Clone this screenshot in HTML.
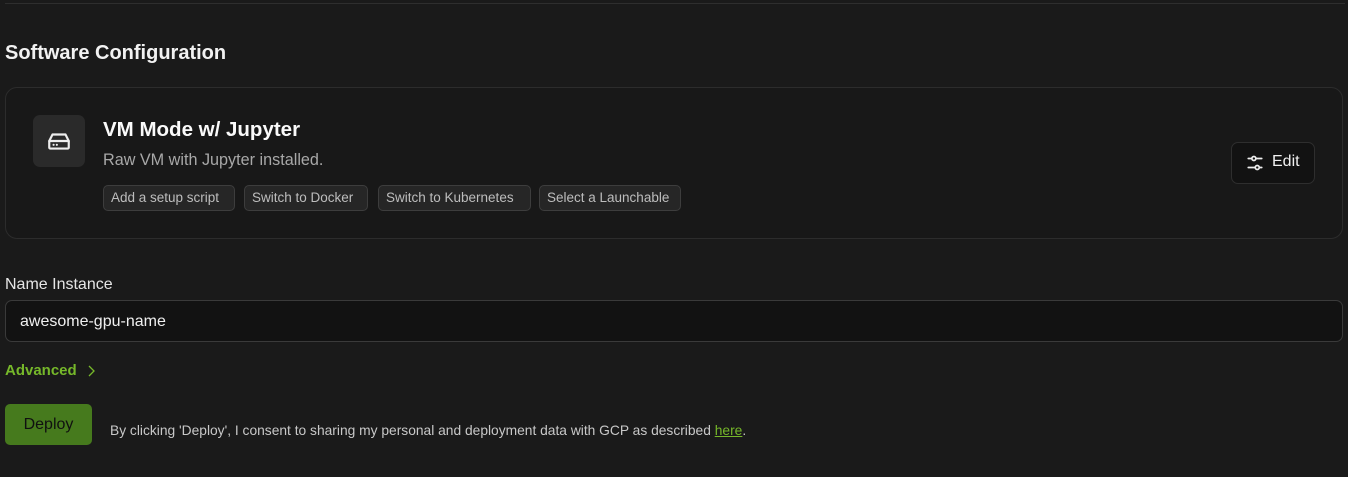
<!DOCTYPE html>
<html><head><style>
*{box-sizing:border-box;margin:0;padding:0}
body{width:1348px;height:477px;background:#1a1a1a;font-family:"Liberation Sans",sans-serif;color:#eee;position:relative;overflow:hidden}
.abs{position:absolute}
.tag{position:absolute;top:185px;height:26px;border:1px solid #3d3d3d;background:#262626;border-radius:5px;font-size:13.5px;color:#bdbdbd;line-height:24px;padding:0 7px;white-space:nowrap}
</style></head><body>
<div class="abs" style="left:5px;top:3px;width:1340px;height:1px;background:#2e2e2e"></div>
<div class="abs" style="left:5px;top:42px;font-size:20px;font-weight:bold;color:#f2f2f2">Software Configuration</div>
<div class="abs" style="left:5px;top:87px;width:1338px;height:152px;border:1px solid #2c2c2c;border-radius:12px;background:#181818"></div>
<div class="abs" style="left:33px;top:115px;width:52px;height:52px;border-radius:7px;background:#2a2a2a"></div>
<svg class="abs" style="left:46px;top:128px" width="26" height="26" viewBox="0 0 24 24" fill="none" stroke="#eee" stroke-width="2" stroke-linecap="round" stroke-linejoin="round"><path d="M3 12h18v6a1 1 0 0 1-1 1H4a1 1 0 0 1-1-1z"/><path d="M3 12l3-6h12l3 6"/><path d="M7 15.5h.01M10 15.5h.01"/></svg>
<div class="abs" style="left:103px;top:118px;font-size:20.5px;font-weight:bold;color:#fafafa">VM Mode w/ Jupyter</div>
<div class="abs" style="left:103px;top:151px;font-size:16.2px;color:#a8a8a8">Raw VM with Jupyter installed.</div>
<div class="tag" style="left:103px;width:132px">Add a setup script</div>
<div class="tag" style="left:244px;width:124px">Switch to Docker</div>
<div class="tag" style="left:378px;width:153px">Switch to Kubernetes</div>
<div class="tag" style="left:539px;width:142px">Select a Launchable</div>
<div class="abs" style="left:1231px;top:142px;width:84px;height:42px;border:1px solid #2e2e2e;border-radius:7px;background:#121212"></div>
<svg class="abs" style="left:1246px;top:154px" width="18" height="18" viewBox="0 0 16 16" fill="none" stroke="#eee" stroke-width="1.5" stroke-linecap="round"><path d="M2 4h3M9 4h5M2 12h6M12 12h2"/><circle cx="7" cy="4" r="1.8"/><circle cx="10" cy="12" r="1.8"/></svg>
<div class="abs" style="left:1272px;top:153px;font-size:16px;color:#f0f0f0">Edit</div>
<div class="abs" style="left:5px;top:276px;font-size:16px;color:#e6e6e6">Name Instance</div>
<div class="abs" style="left:5px;top:300px;width:1338px;height:42px;border:1px solid #3a3a3a;border-radius:7px;background:#121212;padding-left:14px;line-height:42px;font-size:16px;color:#f0f0f0">awesome-gpu-name</div>
<div class="abs" style="left:5px;top:362px;font-size:15px;font-weight:bold;color:#76b82a">Advanced</div>
<svg class="abs" style="left:86px;top:364px" width="10" height="14" viewBox="0 0 10 14" fill="none" stroke="#76b82a" stroke-width="1.3"><path d="M3 2l5 5-5 5"/></svg>
<div class="abs" style="left:5px;top:404px;width:87px;height:41px;border-radius:5px;background:#467a1d;text-align:center;line-height:41px;font-size:16px;color:#101010">Deploy</div>
<div class="abs" style="left:110px;top:423px;font-size:13.8px;color:#c8c8c8;white-space:nowrap">By clicking 'Deploy', I consent to sharing my personal and deployment data with GCP as described <span style="color:#76b82a;text-decoration:underline">here</span>.</div>
</body></html>
